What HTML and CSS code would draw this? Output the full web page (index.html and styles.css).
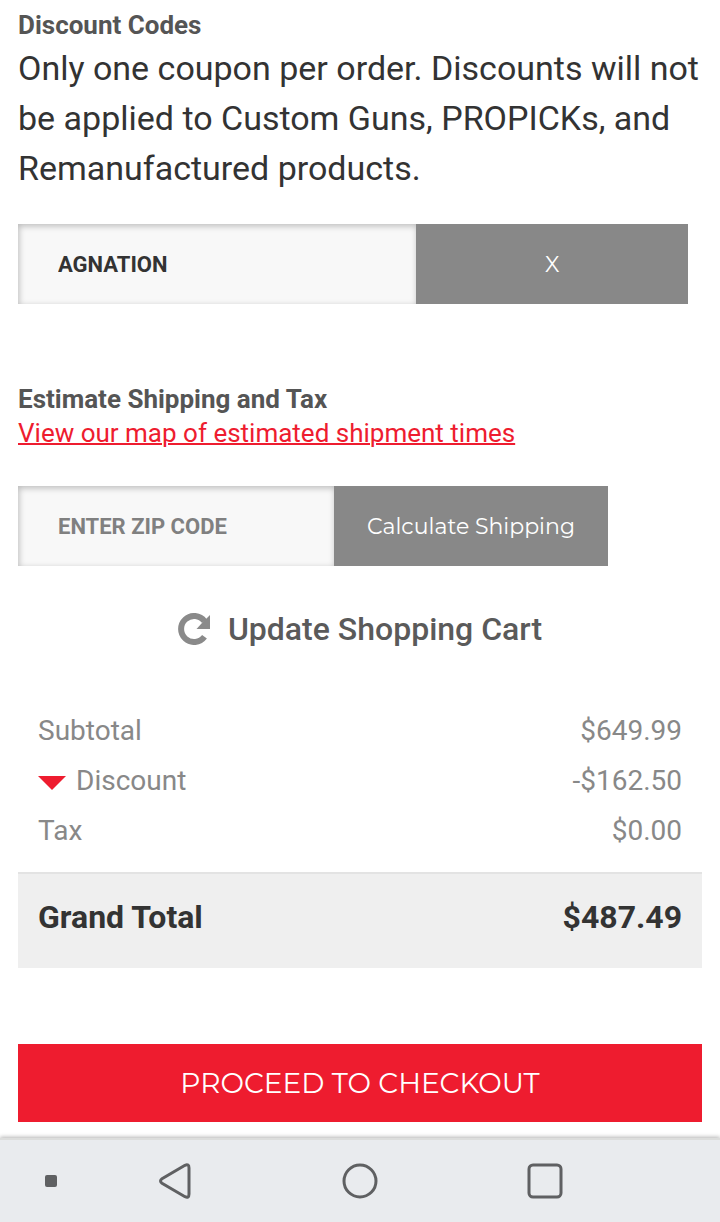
FILE: index.html
```html
<!DOCTYPE html>
<html lang="en">
<head>
    <meta charset="UTF-8">
    <meta name="viewport" content="width=device-width, initial-scale=1.0">
    <title>Shopping Cart</title>
    <link rel="stylesheet" href="styles.css">
</head>
<body>
    <main class="cart">
        <!-- Discount codes -->
        <form class="discount">
            <h2><label for="coupon">Discount Codes</label></h2>
            <p class="note">Only one coupon per order. Discounts will not be applied to Custom Guns, PROPICKs, and Remanufactured products.</p>
            <div class="field-row coupon-row">
                <input type="text" id="coupon" value="AGNATION">
                <button type="button" class="grey-btn">X</button>
            </div>
        </form>

        <!-- Shipping estimate -->
        <form class="shipping">
            <h2><label for="zip">Estimate Shipping and Tax</label></h2>
            <a href="#" class="map-link">View our map of estimated shipment times</a>
            <div class="field-row zip-row">
                <input type="text" id="zip" placeholder="ENTER ZIP CODE">
                <button type="button" class="grey-btn">Calculate Shipping</button>
            </div>
        </form>

        <button type="button" class="update-btn">
            <svg class="refresh" viewBox="0 0 32 32" aria-hidden="true">
                <path d="M26.500 23.800A13 13 0 1 1 26.500 8.200" fill="none" stroke="#8a8a8a" stroke-width="6"/>
                <path d="M32 2v14H18.500l5-5.500z" fill="#8a8a8a"/>
            </svg>
            Update Shopping Cart
        </button>

        <!-- Totals -->
        <table class="totals">
            <tbody>
                <tr>
                    <th scope="row">Subtotal</th>
                    <td>$649.99</td>
                </tr>
                <tr>
                    <th scope="row"><span class="arrow"></span>Discount</th>
                    <td>-$162.50</td>
                </tr>
                <tr>
                    <th scope="row">Tax</th>
                    <td>$0.00</td>
                </tr>
            </tbody>
            <tfoot>
                <tr>
                    <th scope="row">Grand Total</th>
                    <td>$487.49</td>
                </tr>
            </tfoot>
        </table>

        <button type="button" class="checkout-btn">PROCEED TO CHECKOUT</button>
    </main>

    <nav class="navbar">
        <button type="button" aria-label="Hide bar">
            <svg width="12" height="12" viewBox="0 0 12 12"><rect width="12" height="12" rx="2" fill="#5f6062"/></svg>
        </button>
        <button type="button" aria-label="Back">
            <svg width="36" height="36" viewBox="0 0 36 36"><path d="M28 2.300L5 15.800Q2 18 5 20.200L28 33.700Q32 35.500 32 31V5Q32 .5 28 2.300z"/></svg>
        </button>
        <button type="button" aria-label="Home">
            <svg width="36" height="36" viewBox="0 0 36 36"><circle cx="18" cy="18" r="16"/></svg>
        </button>
        <button type="button" aria-label="Recent">
            <svg width="36" height="36" viewBox="0 0 36 36"><rect x="2" y="2" width="32" height="32" rx="4"/></svg>
        </button>
    </nav>
</body>
</html>
```
FILE: styles.css
```css
* {
    box-sizing: border-box;
}

body {
    display: flex;
    flex-direction: column;
    min-height: 100vh;
    margin: 0;
    background: #fff;
    color: #333;
    font-family: Roboto, sans-serif;
}

button {
    border: none;
    cursor: pointer;
}

.cart {
    flex: 1;
    padding: 8px 18px 16px;
}

h2 {
    margin: 0;
    color: #555;
    font-size: 26px;
    line-height: 34px;
}

.note {
    margin: 1px 0 31px;
    font-size: 34px;
    line-height: 50px;
}

/* Text box with a button joined to it */
.field-row {
    display: flex;
    height: 80px;
}

.coupon-row {
    width: 98%;
}

.zip-row {
    max-width: 590px;
    margin-top: 36px;
}

.field-row input {
    flex: 1;
    min-width: 0;
    padding: 0 40px;
    border: none;
    border-radius: 0;
    background: #f8f8f8;
    box-shadow: inset 1px 2px 6px rgba(0, 0, 0, 0.25);
    color: #333;
    font-family: inherit;
    font-size: 22px;
    font-weight: bold;
}

.field-row input::placeholder {
    color: #808080;
}

.grey-btn {
    width: 272px;
    background: #888;
    color: #fff;
    font-family: Montserrat, Inter, sans-serif;
    font-size: 22px;
}

.zip-row .grey-btn {
    width: 274px;
}

.shipping {
    margin-top: 78px;
}

.map-link {
    display: block;
    color: #ee1c2f;
    font-size: 26px;
    line-height: 34px;
    text-decoration-thickness: 2px;
}

.update-btn {
    display: flex;
    align-items: center;
    gap: 18px;
    margin: 38px auto 52px;
    padding: 0;
    background: none;
    color: #5a5a5a;
    font-family: inherit;
    font-size: 32px;
    font-weight: 500;
    line-height: 50px;
}

.refresh {
    width: 32px;
    height: 32px;
}

.totals {
    width: 100%;
    border-collapse: collapse;
    color: #888;
    font-size: 28px;
    line-height: 50px;
}

.totals th,
.totals td {
    padding: 0 20px;
    font-weight: normal;
    text-align: left;
}

.totals td {
    text-align: right;
}

.totals tbody tr:last-child > * {
    padding-bottom: 16px;
}

.totals tfoot {
    background: #efefef;
    color: #333;
    font-size: 32px;
}

.totals tfoot th,
.totals tfoot td {
    padding: 18px 20px 26px;
    border-top: 2px solid #e3e3e3;
    font-weight: bold;
}

.arrow {
    display: inline-block;
    margin-right: 10px;
    border: 14px solid transparent;
    border-top-color: #ee1c2f;
    border-bottom: none;
}

.checkout-btn {
    display: block;
    width: 100%;
    height: 78px;
    margin-top: 76px;
    background: #ee1c2f;
    color: #fff;
    font-family: Montserrat, Inter, sans-serif;
    font-size: 28px;
}

/* Phone navigation bar */
.navbar {
    display: grid;
    grid-template-columns: 102fr 145fr 225fr 145fr 103fr;
    height: 84px;
    border-top: 2px solid #dcdddc;
    background: #e9ebee;
    box-shadow: 0 -1px 4px rgba(0, 0, 0, 0.3);
}

.navbar button {
    display: flex;
    align-items: center;
    justify-content: center;
    padding: 0;
    background: none;
}

.navbar svg {
    fill: none;
    stroke: #5f6062;
    stroke-width: 3;
}

.navbar rect[fill] {
    stroke: none;
}
```
